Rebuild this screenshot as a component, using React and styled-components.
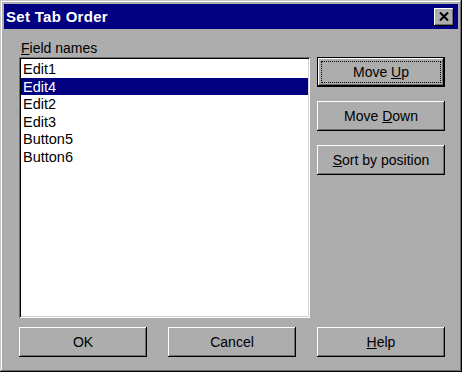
import React from 'react'
import styled, { createGlobalStyle } from 'styled-components'

const face = '#adadad'

const GlobalStyle = createGlobalStyle`
    html, body {
        margin: 0;
        padding: 0;
        background: ${face};
    }
    body {
        font-family: "Liberation Sans", Arial, sans-serif;
        font-size: 14px;
        color: #000;
    }
`;

const fields = ['Edit1', 'Edit4', 'Edit2', 'Edit3', 'Button5', 'Button6']

function CloseIcon() {
    return (
        <svg width="10" height="9" viewBox="0 0 10 9">
            <path d="M1 0.5 L9 8.5 M9 0.5 L1 8.5" stroke="#000" strokeWidth="2" />
        </svg>
    )
}

export default function App() {
    const selected = 1
    return (
        <>
            <GlobalStyle />
            <Window>
                <TitleBar>
                    <Title>Set Tab Order</Title>
                    <CloseButton><CloseIcon /></CloseButton>
                </TitleBar>
                <Body>
                    <Label><u>F</u>ield names</Label>
                    <ListBox>
                        {fields.map((f, i) => (
                            <ListRow key={f} $selected={i === selected}>{f}</ListRow>
                        ))}
                    </ListBox>
                    <SideButtons>
                        <Button $default>Move <u>U</u>p</Button>
                        <Button>Move <u>D</u>own</Button>
                        <Button><u>S</u>ort by position</Button>
                    </SideButtons>
                </Body>
                <Footer>
                    <Button>OK</Button>
                    <Button>Cancel</Button>
                    <Button><u>H</u>elp</Button>
                </Footer>
            </Window>
        </>
    )
}

const Window = styled.div`
    box-sizing: border-box;
    width: 462px;
    height: 372px;
    padding: 4px;
    background: ${face};
    box-shadow: inset -1px -1px #000, inset 1px 1px #c8c8c8,
        inset -2px -2px #6e6e6e, inset 2px 2px #fff;
    display: flex;
    flex-direction: column;
`;

const TitleBar = styled.div`
    height: 25px;
    background: #000080;
    display: flex;
    align-items: center;
    justify-content: space-between;
    padding: 0 4px 0 2px;
`;

const Title = styled.span`
    color: #fff;
    font-weight: bold;
    font-size: 15px;
    letter-spacing: 0.3px;
`;

const CloseButton = styled.div`
    box-sizing: border-box;
    width: 20px;
    height: 18px;
    background: ${face};
    display: flex;
    align-items: center;
    justify-content: center;
    box-shadow: inset -1px -1px #000, inset 1px 1px #fff, inset -2px -2px #6e6e6e;
`;

const Body = styled.div`
    display: grid;
    grid-template-columns: 291px 128px;
    grid-template-rows: 17px 261px;
    column-gap: 7px;
    margin: 11px 0 0 15px;
`;

const Label = styled.div`
    grid-column: 1;
    grid-row: 1;
    line-height: 17px;
    padding-left: 2px;
`;

const ListBox = styled.div`
    grid-column: 1;
    grid-row: 2;
    box-sizing: border-box;
    background: #fff;
    padding: 3px 2px 2px 2px;
    box-shadow: inset 1px 1px #6e6e6e, inset -1px -1px #fff,
        inset 2px 2px #000, inset -2px -2px #d4d4d4;
`;

const ListRow = styled.div`
    height: 17.5px;
    line-height: 18px;
    padding-left: 2px;
    font-size: 14.5px;
    background: ${p => (p.$selected ? '#000080' : 'transparent')};
    color: ${p => (p.$selected ? '#fff' : '#000')};
`;

const SideButtons = styled.div`
    grid-column: 2;
    grid-row: 2;
    display: flex;
    flex-direction: column;
    gap: 14px;
`;

const Button = styled.button`
    box-sizing: border-box;
    width: 128px;
    height: 30px;
    padding: 0;
    background: ${face};
    border: ${p => (p.$default ? '1px solid #000' : 'none')};
    font-family: "Liberation Sans", Arial, sans-serif;
    font-size: 14px;
    color: #000;
    box-shadow: inset -1px -1px #000, inset 1px 1px #fff, inset -2px -2px #6e6e6e;
    outline: ${p => (p.$default ? '1px dotted #000' : 'none')};
    outline-offset: -5px;
`;

const Footer = styled.div`
    display: flex;
    gap: 21px;
    margin: 9px 0 0 15px;
`;
